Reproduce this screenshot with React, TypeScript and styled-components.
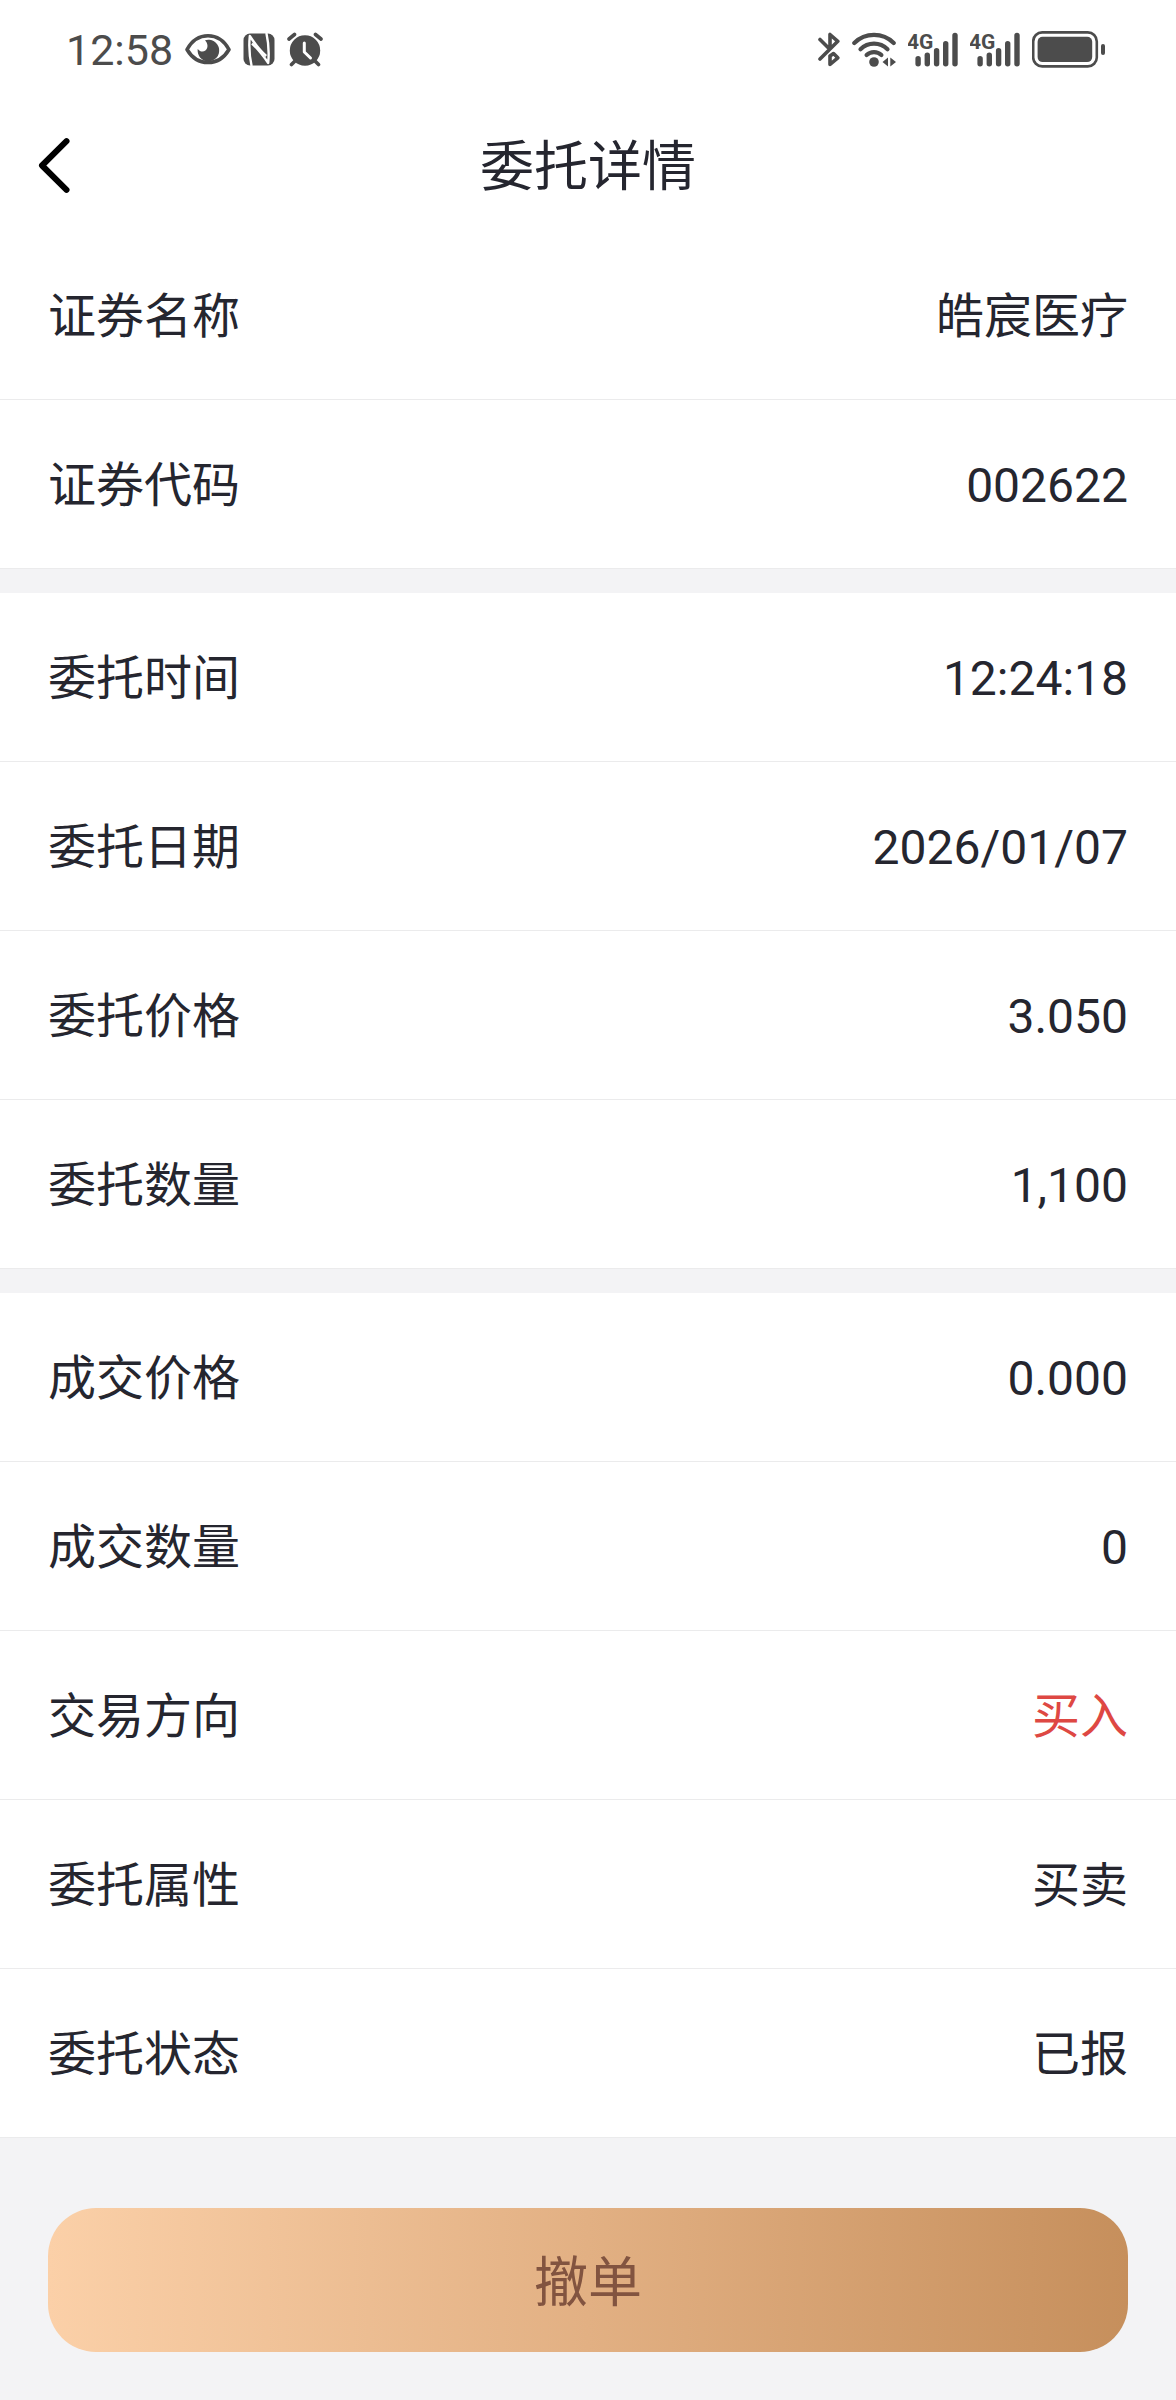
import React from "react";
import styled, { createGlobalStyle } from "styled-components";

const INK = "#25262f";
const STATUS = "#4c4c4c";

const GlobalStyle = createGlobalStyle`
  *, *::before, *::after { box-sizing: border-box; }
  body {
    margin: 0;
    background: #f3f3f5;
    color: ${INK};
    font-family: Roboto, "Noto Sans CJK SC", sans-serif;
    font-size: 48px;
    line-height: 1;
  }
`;

const Page = styled.div`
  display: flex;
  flex-direction: column;
  min-height: 100vh;
`;

const StatusBar = styled.div`
  display: flex;
  align-items: center;
  justify-content: space-between;
  height: 100px;
  padding: 0 70px 0 66px;
  background: #fff;
  color: ${STATUS};
`;

const StatusGroup = styled.div`
  display: flex;
  align-items: center;
  gap: 12px;
`;

const Clock = styled.time`
  font-size: 43px;
`;

const Glyph = styled.svg`
  display: block;
  height: 38px;
  flex: none;
`;

const NetworkLabel = styled.text`
  font-size: 21px;
  font-weight: 700;
  fill: ${STATUS};
`;

const NavBar = styled.header`
  display: grid;
  grid-template-columns: 108px 1fr 108px;
  align-items: center;
  height: 131px;
  background: #fff;
`;

const BackButton = styled.button`
  display: flex;
  align-items: center;
  justify-content: center;
  height: 108px;
  padding: 0;
  border: 0;
  background: none;
  color: #000;
`;

const Title = styled.h1`
  margin: 0;
  padding-top: 4px;
  font-size: 54px;
  font-weight: 400;
  text-align: center;
`;

const Main = styled.main`
  display: flex;
  flex-direction: column;
  gap: 24px;
`;

const Group = styled.dl`
  margin: 0;
  background: #fff;
`;

const Row = styled.div`
  display: flex;
  align-items: center;
  justify-content: space-between;
  min-height: 169px;
  padding: 4px 48px 0;
  border-bottom: 1px solid #ebebec;
`;

const Label = styled.dt``;

const Value = styled.dd<{ $tone?: "buy" }>`
  margin: 0;
  color: ${(p) => (p.$tone === "buy" ? "#de4843" : "inherit")};
`;

const Footer = styled.footer`
  display: flex;
  padding: 70px 48px 48px;
`;

const CancelButton = styled.button`
  flex: 1;
  height: 144px;
  padding: 0 0 4px;
  border: 0;
  border-radius: 48px;
  background: linear-gradient(90deg, #fbd0a8, #e2b083 50%, #c68f5c);
  color: #825440;
  font-family: inherit;
  font-size: 54px;
`;

const EyeIcon = () => (
  <Glyph width="46" viewBox="0 -1 46 38" fill="none" aria-hidden="true">
    <path
      d="M2 17.5C7 8.500 14.500 3.800 23 3.800S39 8.500 44 17.500C39 26 31.500 30.500 23 30.500S7 26 2 17.500Z"
      stroke={STATUS}
      strokeWidth="3.600"
      strokeLinejoin="round"
    />
    <path
      d="M20 8.300A10.800 10.800 0 1 1 12.700 17C15 19.800 18.200 20.300 20.400 18.500C23.500 16 23 11.500 20 8.300Z"
      fill={STATUS}
    />
  </Glyph>
);

const NfcIcon = () => (
  <Glyph width="32" viewBox="0 -1 32 38" fill="none" aria-hidden="true">
    <rect x="0.500" y="1.500" width="31" height="32" rx="6.500" fill={STATUS} />
    <path
      d="M8.600 34C6.600 25 5.800 14 6.800 4C12 12 17.500 19 23.200 24"
      stroke="#fff"
      strokeWidth="2.400"
      strokeLinejoin="round"
    />
    <path
      d="M23.400 1C25.400 10 26.200 21 25.200 31C20 23.500 14.500 16.500 9 11.500"
      stroke="#fff"
      strokeWidth="2.400"
      strokeLinejoin="round"
    />
  </Glyph>
);

const AlarmIcon = () => (
  <Glyph width="36" viewBox="0 -1 36 38" fill="none" aria-hidden="true">
    <circle cx="18" cy="18.500" r="15.200" fill={STATUS} />
    <path
      d="M2 7L7.500 2.500M34 7L28.500 2.500M8 29L4.500 32.500M28 29L31.500 32.500"
      stroke={STATUS}
      strokeWidth="3.600"
      strokeLinecap="round"
    />
    <path d="M17.300 11V20L23.500 26" stroke="#fff" strokeWidth="3" strokeLinecap="round" strokeLinejoin="round" />
  </Glyph>
);

const BluetoothIcon = () => (
  <Glyph width="22" viewBox="0 -1 22 38" fill="none" aria-hidden="true">
    <path
      d="M2 27L19.800 9.300L12 2.500V17M2 7.500L11.500 17M12 24V32.500L19.800 25.800L15.500 21.500L12 24"
      stroke={STATUS}
      strokeWidth="3.600"
      strokeLinecap="round"
      strokeLinejoin="round"
    />
  </Glyph>
);

const WifiIcon = () => (
  <Glyph width="44" viewBox="0 -1 44 38" fill="none" aria-hidden="true">
    <g stroke={STATUS} strokeWidth="4.200" strokeLinecap="round">
      <path d="M2.300 11A28 28 0 0 1 41.700 11" />
      <path d="M8.500 17.200A19.200 19.200 0 0 1 35.500 17.200" />
      <path d="M14.600 23A10.800 10.800 0 0 1 29.400 23" />
    </g>
    <circle cx="22" cy="30" r="4.800" fill={STATUS} />
    <path d="M30.500 30L36 25.500V34.500ZM44 30L38.300 25.500V34.500Z" fill={STATUS} />
  </Glyph>
);

const BARS = [
  { x: 7.4, top: 24 },
  { x: 16.6, top: 20.6 },
  { x: 25.9, top: 16 },
  { x: 35, top: 9 },
  { x: 44.3, top: 0.7 },
];

const SignalIcon = () => (
  <Glyph width="50" viewBox="0 -1 50 38" role="img" aria-label="4G">
    <NetworkLabel x="-1" y="17">4G</NetworkLabel>
    {BARS.map((b) => (
      <rect key={b.x} x={b.x} y={b.top} width="5.400" height={34.5 - b.top} rx="2.700" fill={STATUS} />
    ))}
  </Glyph>
);

const BatteryIcon = () => (
  <Glyph width="74" viewBox="0 -1 74 38" fill="none" aria-hidden="true">
    <rect x="1.200" y="0.400" width="63.600" height="34" rx="9" stroke={STATUS} strokeWidth="2.600" />
    <rect x="5.600" y="4.700" width="54.600" height="25.400" rx="5" fill={STATUS} />
    <rect x="69" y="12" width="4" height="11" rx="2" fill={STATUS} />
  </Glyph>
);

const BackIcon = () => (
  <svg width="36" height="60" viewBox="0 0 36 60" fill="none" aria-hidden="true">
    <path d="M30.500 5.200L6 29.500L30.500 53.800" stroke="#000" strokeWidth="6" strokeLinecap="round" strokeLinejoin="round" />
  </svg>
);

type Field = { label: string; value: string; tone?: "buy" };

const groups: Field[][] = [
  [
    { label: "证券名称", value: "皓宸医疗" },
    { label: "证券代码", value: "002622" },
  ],
  [
    { label: "委托时间", value: "12:24:18" },
    { label: "委托日期", value: "2026/01/07" },
    { label: "委托价格", value: "3.050" },
    { label: "委托数量", value: "1,100" },
  ],
  [
    { label: "成交价格", value: "0.000" },
    { label: "成交数量", value: "0" },
    { label: "交易方向", value: "买入", tone: "buy" },
    { label: "委托属性", value: "买卖" },
    { label: "委托状态", value: "已报" },
  ],
];

export default function App() {
  return (
    <Page lang="zh-CN">
      <GlobalStyle />
      <StatusBar>
        <StatusGroup>
          <Clock>12:58</Clock>
          <EyeIcon />
          <NfcIcon />
          <AlarmIcon />
        </StatusGroup>
        <StatusGroup>
          <BluetoothIcon />
          <WifiIcon />
          <SignalIcon />
          <SignalIcon />
          <BatteryIcon />
        </StatusGroup>
      </StatusBar>
      <NavBar>
        <BackButton type="button" aria-label="返回">
          <BackIcon />
        </BackButton>
        <Title>委托详情</Title>
      </NavBar>
      <Main>
        {groups.map((fields, i) => (
          <Group key={i}>
            {fields.map((f) => (
              <Row key={f.label}>
                <Label>{f.label}</Label>
                <Value $tone={f.tone}>{f.value}</Value>
              </Row>
            ))}
          </Group>
        ))}
      </Main>
      <Footer>
        <CancelButton type="button">撤单</CancelButton>
      </Footer>
    </Page>
  );
}
